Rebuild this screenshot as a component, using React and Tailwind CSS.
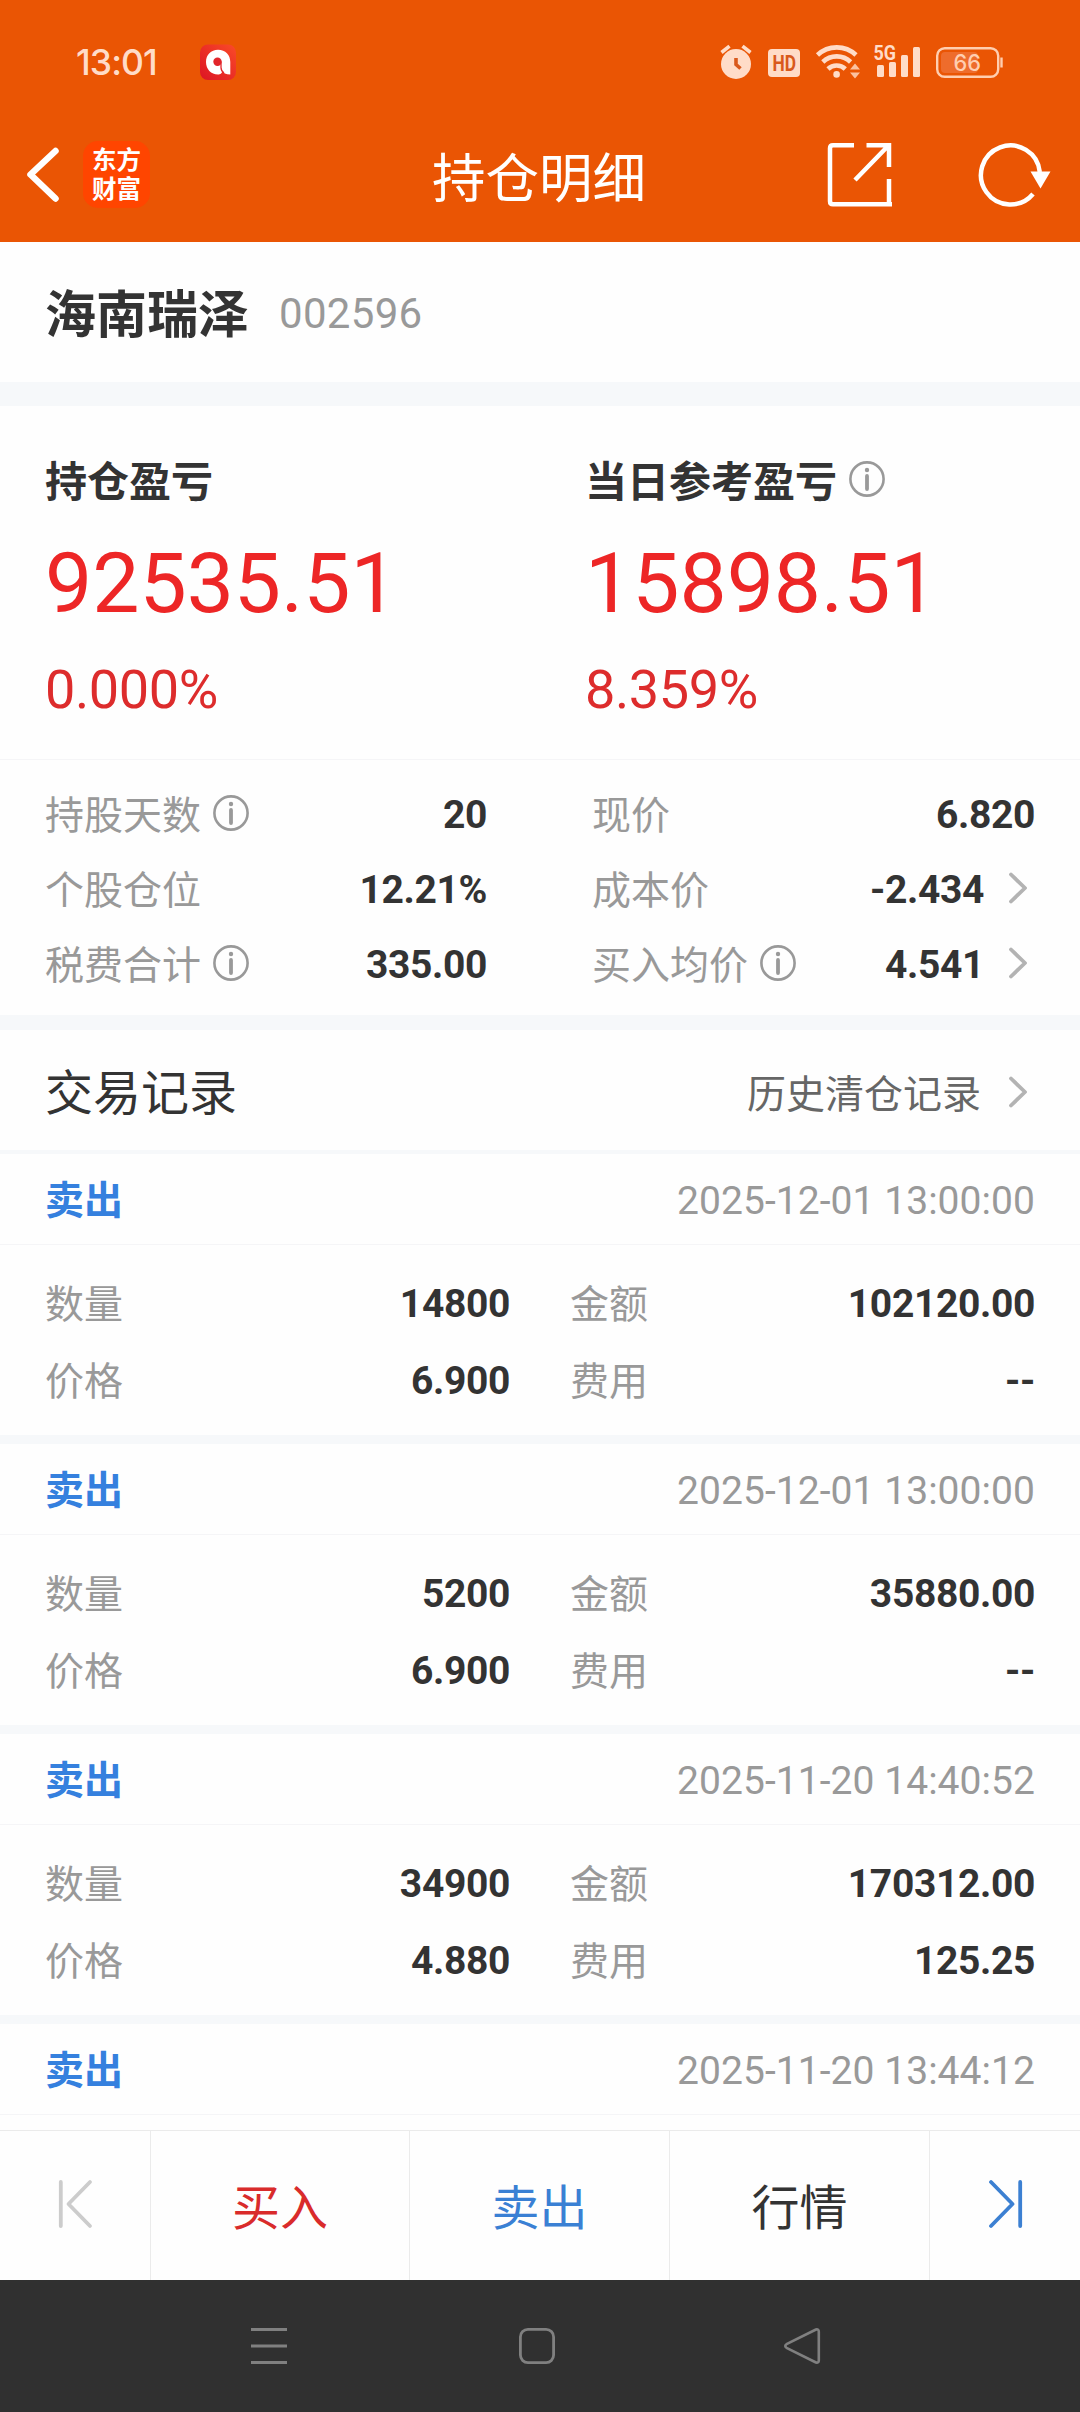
import React from 'react';

const records = [
  { side: '卖出', time: '2025-12-01 13:00:00', amount: '14800', total: '102120.00', price: '6.900', fee: '--' },
  { side: '卖出', time: '2025-12-01 13:00:00', amount: '5200', total: '35880.00', price: '6.900', fee: '--' },
  { side: '卖出', time: '2025-11-20 14:40:52', amount: '34900', total: '170312.00', price: '4.880', fee: '125.25' },
  { side: '卖出', time: '2025-11-20 13:44:12' },
];

export default function App() {
  return (
    <div className="w-[1080px] h-[2412px] flex flex-col overflow-hidden bg-[#fefefe] text-[#333] font-['Roboto','Noto_Sans_CJK_SC',sans-serif]">
      <header className="h-[242px] shrink-0 bg-[#ea5504]">
        <StatusBar />
        <TitleBar />
      </header>
      <main className="flex-1 min-h-0 overflow-hidden">
        <div className="h-[140px] flex items-center gap-[30px] px-[45px] pt-1">
          <h1 className="text-[51px] leading-none font-bold pt-[3px]">海南瑞泽</h1>
          <span className="text-[42px] leading-none text-[#999] tracking-[0.3px]">002596</span>
        </div>
        <div className="h-6 bg-[#f6f8fa]" />
        <section className="h-[354px] grid grid-cols-2 border-b border-[#f5f5f7]">
          <Profit label="持仓盈亏" value="92535.51" percent="0.000%" />
          <Profit label="当日参考盈亏" value="15898.51" percent="8.359%" info />
        </section>
        <section className="h-[255px] pt-[17px] pl-[45px] pr-[45px] grid grid-cols-[442px_443px] gap-x-[105px] auto-rows-[75px]">
          <Detail label="持股天数" value="20" info />
          <Detail label="现价" value="6.820" />
          <Detail label="个股仓位" value="12.21%" />
          <Detail label="成本价" value="-2.434" arrow />
          <Detail label="税费合计" value="335.00" info />
          <Detail label="买入均价" value="4.541" info arrow />
        </section>
        <div className="h-[15px] bg-[#f6f8fa]" />
        <div className="h-[124px] flex items-center justify-between pl-[45px] pr-[53px] border-b-4 border-[#f6f8fa]">
          <h2 className="text-[48px] leading-none pt-[7px]">交易记录</h2>
          <div className="flex items-center">
            <span className="text-[39px] leading-none text-[#666] pt-[11px] mr-7">历史清仓记录</span>
            <Chevron className="mt-1" />
          </div>
        </div>
        {records.map((r, i) => (
          <Record key={i} {...r} />
        ))}
      </main>
      <BottomBar />
      <SystemNav />
    </div>
  );
}

function StatusBar() {
  return (
    <div className="h-[124px] flex items-start pt-[44px] text-[#ffdcc8]">
      <span className="ml-[76px] w-[124px] text-[35.5px] leading-[37px] font-medium font-['Inter',sans-serif] tracking-[-0.9px]">13:01</span>
      <svg viewBox="0 0 36 36" className="w-9 h-9">
        <defs>
          <linearGradient id="app" x1="0" y1="1" x2="1" y2="0">
            <stop offset="0" stopColor="#dc1424" />
            <stop offset="1" stopColor="#fa4a28" />
          </linearGradient>
        </defs>
        <rect width="36" height="35.5" y="0.5" rx="8" fill="url(#app)" />
        <path d="M18 5.800C25.500 5.800 30.300 11 30.300 18V30.500C26 30.500 23 29 22 26.500C23 29 20 30.500 18 30.500C11 30.500 6 25 6 18S11 5.800 18 5.800z" fill="#fff" />
        <circle cx="17.500" cy="17.800" r="4.200" fill="#e2252a" />
        <path d="M21 17.500v6q0 3.500 3 5.500" fill="none" stroke="#e2252a" strokeWidth="1.300" />
      </svg>
      <svg viewBox="720 44 32 36" className="w-8 h-9 ml-[484px]" fill="currentColor">
        <circle cx="736" cy="64" r="15" />
        <path d="M721.500 52.500l8-6.300M750.500 52.500l-8-6.300" stroke="currentColor" strokeWidth="3.600" />
        <path d="M736 58v6.500l4.500 4" fill="none" stroke="#d9591c" strokeWidth="3.600" />
      </svg>
      <svg viewBox="767 44 34 36" className="w-[34px] h-9 ml-[15px] overflow-visible">
        <rect x="768" y="49" width="32" height="28" rx="4" fill="currentColor" />
        <text x="772.500" y="71" textLength="23.500" lengthAdjust="spacingAndGlyphs" fontSize="22.500" fontWeight="700" fill="#d9591c">HD</text>
      </svg>
      <svg viewBox="815 44 46 36" className="w-[46px] h-9 ml-[14px]" fill="none" stroke="currentColor" strokeWidth="4.600">
        <path d="M817.500 55a28 28 0 0 1 38.500 0" />
        <path d="M822.800 62a20 20 0 0 1 27.800 0" />
        <path d="M828 69a12.500 12.500 0 0 1 17.300 0" />
        <circle cx="836.600" cy="74.400" r="3.300" fill="currentColor" stroke="none" />
        <path d="M850 69.500l5-6 5 6zM850 72.500l5 6 5-6z" fill="currentColor" stroke="none" opacity="0.800" />
      </svg>
      <svg viewBox="873 44 48 36" className="w-12 h-9 ml-3 overflow-visible" fill="currentColor">
        <text x="873.500" y="60" textLength="22.500" lengthAdjust="spacingAndGlyphs" fontSize="20.500" fontWeight="700">5G</text>
        <rect x="877" y="65" width="7" height="12" rx="1.500" />
        <rect x="889" y="62" width="7" height="15" rx="1.500" />
        <rect x="901" y="55" width="7" height="22" rx="1.500" />
        <rect x="913" y="47" width="7" height="30" rx="1.500" />
      </svg>
      <svg viewBox="935 44 69 36" className="w-[69px] h-9 ml-[14px]">
        <rect x="937.200" y="48.200" width="61" height="28.600" rx="7.500" fill="none" stroke="#ffceb0" strokeWidth="2.400" />
        <rect x="941" y="52" width="37" height="21" rx="4" fill="#ee6c2c" />
        <path d="M1001.500 57.500v10" stroke="#ffceb0" strokeWidth="2.400" />
        <text x="953.500" y="71" textLength="27.500" lengthAdjust="spacingAndGlyphs" fontSize="22.500" fontWeight="500" fill="#ffceb0" className="font-['Inter',sans-serif]">66</text>
      </svg>
    </div>
  );
}

function TitleBar() {
  return (
    <div className="h-[118px] flex items-start text-white">
      <svg viewBox="24 140 38 70" className="w-[38px] h-[70px] ml-6 mt-4" fill="none" stroke="currentColor" strokeWidth="6.500" strokeLinecap="round" strokeLinejoin="round">
        <path d="M55.500 151L30.500 174.500l25 24" />
      </svg>
      <div className="w-[67px] h-[67px] ml-[21px] mt-[17px] pt-[3px] rounded-[15px] bg-[#ff4500] text-center text-[24.5px] leading-[29px] font-bold font-['Noto_Sans_CJK_SC',sans-serif] whitespace-pre-line">
        {'东方\n财富'}
      </div>
      <div className="w-[216px] ml-[282px] mt-[29px] text-[53.5px] leading-[54px]">持仓明细</div>
      <svg viewBox="826 141 67 67" className="w-[67px] h-[67px] ml-[178px] mt-[17px]" fill="none" stroke="currentColor" strokeWidth="4.500">
        <path d="M854 145.200H833q-3 0-3 3v53q0 3 3 3h59M889 206V179" />
        <path d="M866.500 145.200H889V167M855 180l33-34" />
      </svg>
      <svg viewBox="977 140 75 68" className="w-[75px] h-[68px] ml-[84px] mt-4" fill="none" stroke="currentColor" strokeWidth="4.500">
        <path d="M1033 194a29.500 29.500 0 1 1 6.800-22" />
        <path d="M1030.500 171.500h20l-10 17z" fill="currentColor" stroke="none" />
      </svg>
    </div>
  );
}

function Info({ className = '' }) {
  return (
    <svg viewBox="0 0 36 36" className={`w-9 h-9 ml-3 ${className}`} fill="none" stroke="#999" strokeWidth="2.600">
      <circle cx="18" cy="18" r="16.600" />
      <path d="M18 15v13" strokeWidth="3.800" strokeLinecap="round" />
      <circle cx="18" cy="9" r="2.200" fill="#999" stroke="none" />
    </svg>
  );
}

function Chevron({ className = '' }) {
  return (
    <svg viewBox="0 0 18 32" className={`w-[18px] h-8 ${className}`} fill="none" stroke="#b3b3b3" strokeWidth="3.800" strokeLinecap="round" strokeLinejoin="round">
      <path d="M2 2.500L16 16 2 29.500" />
    </svg>
  );
}

function Profit({ label, value, percent, info }) {
  return (
    <div className="pl-[45px] pt-14">
      <div className="h-[42px] flex items-center">
        <span className="text-[42px] leading-[42px] font-bold">{label}</span>
        {info && <Info className="-mt-2" />}
      </div>
      <div className="mt-[38px] text-[84px] leading-[84px] text-[#ed2626]">{value}</div>
      <div className="mt-[37px] text-[54px] leading-[54px] tracking-[-0.4px] text-[#dd2c2c]">{percent}</div>
    </div>
  );
}

function Detail({ label, value, info, arrow }) {
  return (
    <div className="flex items-center text-[39px] leading-none">
      <span className="text-[#999] pt-[3px]">{label}</span>
      {info && <Info className="-mt-1" />}
      <span className="ml-auto font-bold tracking-[-0.35px] pt-0.5">{value}</span>
      {arrow && <Chevron className="ml-[25px] mr-2 -mt-1" />}
    </div>
  );
}

function Record({ side, time, amount, total, price, fee }) {
  return (
    <article className="h-[290px] border-b-9 border-[#f6f8fa] text-[39px] leading-none">
      <div className="h-[91px] px-[45px] pt-[5px] flex items-center justify-between border-b border-[#f5f5f7]">
        <span className="font-bold text-[#3580de]">{side}</span>
        <time className="text-[#999] tracking-[0.05px]">{time}</time>
      </div>
      {amount && (
        <div className="pt-[21px] px-[45px] grid grid-cols-[465px_465px] gap-x-[60px] auto-rows-[77px]">
          <Field label="数量" value={amount} />
          <Field label="金额" value={total} />
          <Field label="价格" value={price} />
          <Field label="费用" value={fee} />
        </div>
      )}
    </article>
  );
}

function Field({ label, value }) {
  return (
    <div className="flex items-center justify-between">
      <span className="text-[#999] pt-px">{label}</span>
      <span className="font-bold tracking-[-0.35px]">{value}</span>
    </div>
  );
}

function BottomBar() {
  return (
    <div className="h-[150px] shrink-0 grid grid-cols-[151px_259px_260px_260px_150px] bg-[#fefefe] border-t border-[#ebebeb] divide-x divide-[#ebebeb] text-[48px] leading-none text-center">
      <div className="pt-[47px] pl-[57px]">
        <svg viewBox="0 0 36 52" className="w-9 h-[52px]" fill="none" stroke="#ccc" strokeWidth="3.800" strokeLinecap="round" strokeLinejoin="round">
          <path d="M3.800 4v44M33 4L11.500 26 33 48" />
        </svg>
      </div>
      <div className="pt-[54px] text-[#d92b2b]">买入</div>
      <div className="pt-[54px] text-[#3a80d4]">卖出</div>
      <div className="pt-[54px]">行情</div>
      <div className="pt-[47px] pl-[57px]">
        <svg viewBox="0 0 36 52" className="w-9 h-[52px]" fill="none" stroke="#3c80d2" strokeWidth="3.800" strokeLinecap="round" strokeLinejoin="round">
          <path d="M33.200 4v44M4 4l21.500 22L4 48" />
        </svg>
      </div>
    </div>
  );
}

function SystemNav() {
  return (
    <nav className="h-[132px] shrink-0 flex items-start pt-[46px] bg-[#303030] text-[#808080]">
      <svg viewBox="0 0 40 40" className="w-10 h-10 ml-[249px]" stroke="currentColor" strokeWidth="3">
        <path d="M2 3.500h36M2 20h36M2 36.500h36" />
      </svg>
      <svg viewBox="0 0 40 40" className="w-10 h-10 ml-[228px]" fill="none" stroke="currentColor" strokeWidth="2.800">
        <rect x="3.400" y="3.400" width="33.200" height="33.200" rx="7.500" />
      </svg>
      <svg viewBox="0 0 40 40" className="w-10 h-10 ml-[225px]" fill="none" stroke="currentColor" strokeWidth="2.600" strokeLinejoin="round">
        <path d="M34 3.500L4.500 18.200q-2.500 1.800 0 3.600L34 36.500q2.800 0.500 2.800-2V5.500q0-2.500-2.800-2z" />
      </svg>
    </nav>
  );
}
